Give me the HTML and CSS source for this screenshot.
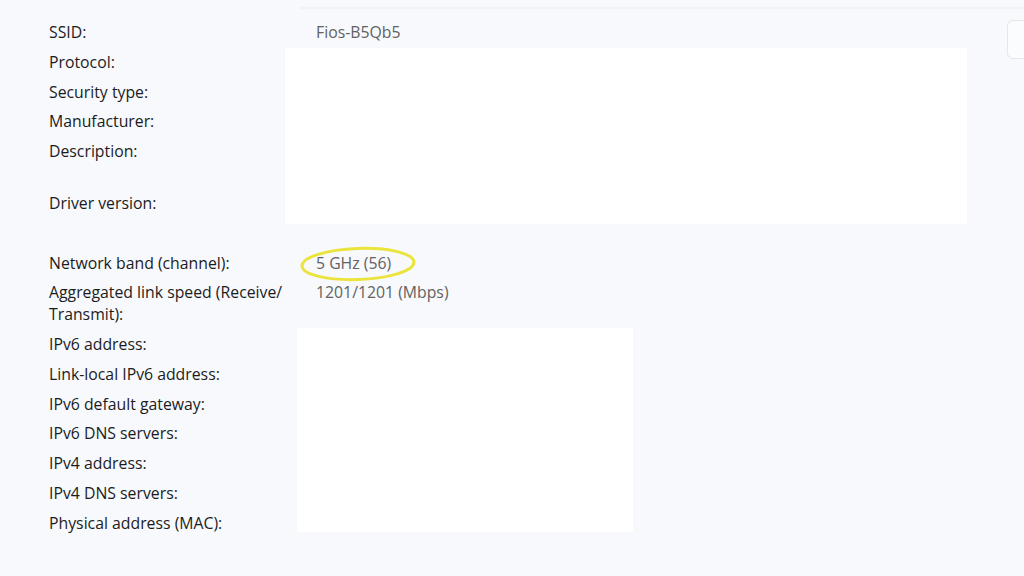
FILE: index.html
```html
<!DOCTYPE html>
<html lang="en">
<head>
<meta charset="utf-8">
<title>Wi-Fi properties</title>
<link rel="stylesheet" href="styles.css">
</head>
<body>
<div class="window">
  <div class="topline"></div>
  <div class="copy-btn"></div>
  <dl class="props">
    <dt>SSID:</dt><dd>Fios-B5Qb5</dd>
    <dt>Protocol:</dt><dd></dd>
    <dt>Security type:</dt><dd></dd>
    <dt>Manufacturer:</dt><dd></dd>
    <dt class="two">Description:</dt><dd class="two"></dd>
    <dt class="driver">Driver version:</dt><dd class="driver"></dd>
    <dt>Network band (channel):</dt><dd class="band">5 GHz (56)</dd>
    <dt>Aggregated link speed (Receive/<wbr>Transmit):</dt><dd>1201/1201 (Mbps)</dd>
    <dt>IPv6 address:</dt><dd></dd>
    <dt>Link-local IPv6 address:</dt><dd></dd>
    <dt>IPv6 default gateway:</dt><dd></dd>
    <dt>IPv6 DNS servers:</dt><dd></dd>
    <dt>IPv4 address:</dt><dd></dd>
    <dt>IPv4 DNS servers:</dt><dd></dd>
    <dt>Physical address (MAC):</dt><dd></dd>
  </dl>
  <div class="redact redact-top"></div>
  <div class="redact redact-bottom"></div>
  <svg class="circle" width="124" height="44" viewBox="0 0 124 44" aria-hidden="true">
    <ellipse cx="62" cy="22" rx="56" ry="15.5" transform="rotate(-2 62 22)" fill="none" stroke="#ebe43c" stroke-width="3"/>
  </svg>
</div>
</body>
</html>
```
FILE: styles.css
```css
html, body {
  margin: 0;
  padding: 0;
}
body {
  background: #f7f9fc;
  font-family: "Open Sans", "Noto Sans", "Liberation Sans", sans-serif;
}
.window {
  position: relative;
  width: 1024px;
  height: 576px;
  overflow: hidden;
}
.topline {
  position: absolute;
  left: 300px;
  right: 0;
  top: 7px;
  height: 2px;
  background: #f0f2f5;
}
.copy-btn {
  position: absolute;
  left: 1007px;
  top: 20px;
  width: 40px;
  height: 37px;
  border: 1px solid #e5e7ea;
  border-radius: 6px;
  background: #fbfcfd;
}
.props {
  margin: 0;
  padding: 21px 0 0 49px;
  display: grid;
  grid-template-columns: 255px 1fr;
  column-gap: 12px;
  row-gap: 7.75px;
  font-size: 15.8px;
  line-height: 22px;
}
.props dt {
  color: #1c1c1c;
}
.props dd {
  margin: 0;
  color: #626262;
}
.props .two {
  min-height: 44px;
}
.props .driver {
  min-height: 52px;
}
.redact {
  position: absolute;
  background: #ffffff;
}
.redact-top {
  left: 285px;
  top: 48px;
  width: 682px;
  height: 176px;
}
.redact-bottom {
  left: 297px;
  top: 328px;
  width: 336px;
  height: 204px;
}
.circle {
  position: absolute;
  left: 296px;
  top: 242px;
}
```
